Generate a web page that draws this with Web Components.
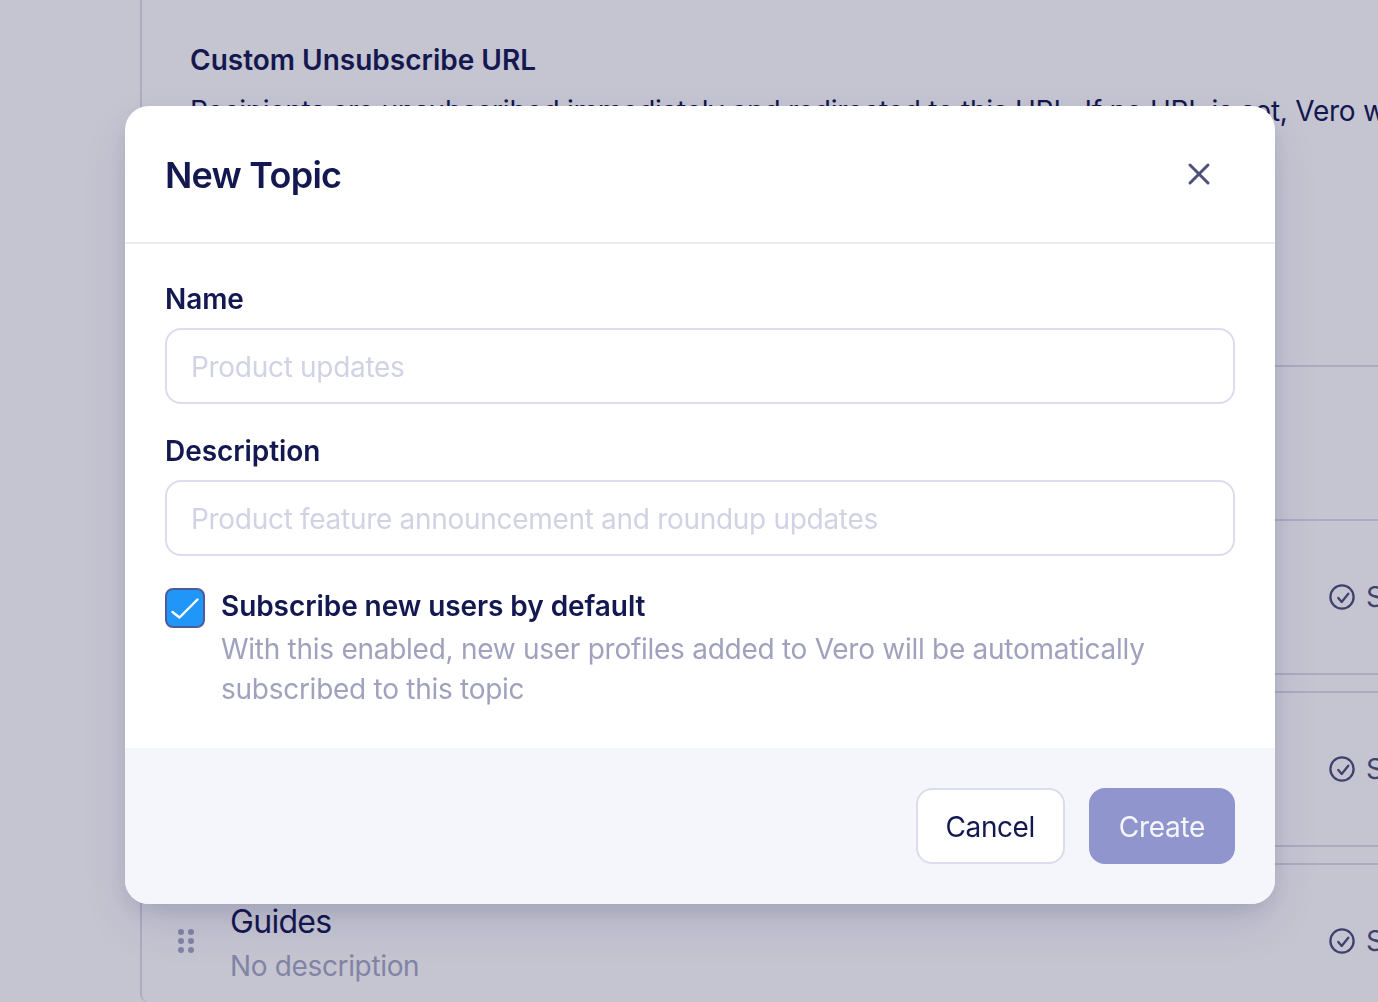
<!DOCTYPE html>
<html lang="en">
<head>
<meta charset="utf-8">
<title>New Topic</title>
<style>
  html, body { margin: 0; height: 100%; overflow: hidden; }
  body { font-family: Inter, "Liberation Sans", sans-serif; color: #141850; background: #fff; }
</style>
</head>
<body>
<settings-page>
  <topic-row name="" description=""></topic-row>
  <topic-row name="" description="" status="Subscribed"></topic-row>
  <topic-row name="" description="" status="Subscribed"></topic-row>
  <topic-row name="Guides" description="No description" status="Subscribed"></topic-row>
</settings-page>

<modal-overlay>
  <span slot="title">New Topic</span>
  <form-field label="Name" placeholder="Product updates"></form-field>
  <form-field label="Description" placeholder="Product feature announcement and roundup updates"></form-field>
  <check-option label="Subscribe new users by default">With this enabled, new user profiles added to Vero will be automatically subscribed to this topic</check-option>
  <app-button slot="footer">Cancel</app-button>
  <app-button slot="footer" primary>Create</app-button>
</modal-overlay>

<script>
class SettingsPage extends HTMLElement {
  constructor() {
    super();
    this.shadowDOM = this.attachShadow({ mode: "open" });
    this.shadowDOM.innerHTML = `
    <style>
      :host { display: flex; height: 1002px; overflow: hidden; }
      .sidebar { flex: 0 0 140px; }
      .main {
        flex: 1;
        min-width: 0;
        border-left: 2px solid #dcdcea;
        border-bottom-left-radius: 8px;
        overflow: hidden;
      }
      .intro { height: 365px; box-sizing: border-box; padding: 41px 0 0 48px; }
      h2 { margin: 0; font-size: 28px; line-height: 38px; font-weight: 600; white-space: nowrap; }
      p { margin: 12px 0 0; font-size: 28px; line-height: 40px; letter-spacing: -0.24px; white-space: nowrap; }
      .rows { display: flex; flex-direction: column; }
    </style>
    <div class="sidebar"></div>
    <div class="main">
      <div class="intro">
        <h2>Custom Unsubscribe URL</h2>
        <p>Recipients are unsubscribed immediately and redirected to this URL. If no URL is set, Vero will show a default page.</p>
      </div>
      <div class="rows"><slot></slot></div>
    </div>`;
  }
}

class TopicRow extends HTMLElement {
  constructor() {
    super();
    this.shadowDOM = this.attachShadow({ mode: "open" });
  }

  connectedCallback() {
    const name = this.getAttribute("name");
    const description = this.getAttribute("description");
    const status = this.getAttribute("status");
    this.shadowDOM.innerHTML = `
    <style>
      :host {
        display: flex;
        flex: none;
        align-items: center;
        box-sizing: border-box;
        height: 156px;
        padding: 0 0 0 36px;
        border-top: 2px solid #dcdcea;
        border-bottom: 2px solid #dcdcea;
        margin-bottom: 16px;
      }
      :host(:first-child) { height: 154px; border-bottom: 0; margin-bottom: 0; }
      .grip { flex: 0 0 16px; width: 16px; height: 24px; margin-right: 36px; }
      .text { flex: 1; min-width: 0; margin-top: 6px; }
      .name { font-size: 32px; line-height: 40px; letter-spacing: -0.7px; }
      .description { margin-top: 4px; font-size: 28px; line-height: 40px; letter-spacing: -0.35px; color: #a6a8c2; }
      .status {
        flex: 0 0 auto;
        width: 49px;
        margin-left: auto;
        display: flex;
        align-items: center;
        gap: 11px;
        font-size: 28px;
        color: #4d507a;
        white-space: nowrap;
      }
      svg { flex: none; display: block; }
    </style>
    ${name ? `
    <svg class="grip" viewBox="0 0 16 24" fill="#a6a8c2">
      <circle cx="3" cy="3" r="3"/><circle cx="13" cy="3" r="3"/>
      <circle cx="3" cy="12" r="3"/><circle cx="13" cy="12" r="3"/>
      <circle cx="3" cy="21" r="3"/><circle cx="13" cy="21" r="3"/>
    </svg>
    <div class="text">
      <div class="name">${name}</div>
      <div class="description">${description}</div>
    </div>` : ""}
    ${status ? `
    <div class="status">
      <svg width="26" height="26" viewBox="0 0 26 26" fill="none" stroke="#4d507a" stroke-width="2.3" stroke-linecap="round" stroke-linejoin="round">
        <circle cx="13" cy="13" r="11.6"/>
        <path d="M9.3 14l3.4 4 6.6-8.3"/>
      </svg>
      <span>${status}</span>
    </div>` : ""}`;
  }
}

class ModalOverlay extends HTMLElement {
  constructor() {
    super();
    this.shadowDOM = this.attachShadow({ mode: "open" });
    this.shadowDOM.innerHTML = `
    <style>
      :host {
        position: fixed;
        inset: 0;
        display: flex;
        align-items: flex-start;
        justify-content: center;
        padding: 106px 0 0 22px;
        box-sizing: border-box;
        background: rgba(23, 23, 75, 0.25);
      }
      .dialog {
        width: 1150px;
        height: 798px;
        display: flex;
        flex-direction: column;
        background: #fff;
        border-radius: 24px;
        overflow: hidden;
      }
      .shadow {
        border-radius: 24px;
        box-shadow: 0 20px 50px -6px rgba(20, 24, 80, 0.14), 0 8px 20px -4px rgba(20, 24, 80, 0.10);
      }
      header {
        flex: 0 0 auto;
        height: 138px;
        box-sizing: border-box;
        display: flex;
        align-items: center;
        justify-content: space-between;
        padding: 0 64px 0 40px;
        border-bottom: 2px solid #ebebf3;
      }
      h1 { margin: 2px 0 0; font-size: 36px; line-height: 44px; font-weight: 600; letter-spacing: -0.75px; }
      .close { display: block; width: 24px; height: 24px; margin-top: -1px; }
      main { flex: 1; display: flex; flex-direction: column; gap: 27px; padding: 35px 40px 0 41px; }
      footer {
        flex: 0 0 156px;
        box-sizing: border-box;
        display: flex;
        justify-content: flex-end;
        align-items: center;
        gap: 24px;
        padding: 0 40px;
        background: #f5f6fb;
      }
    </style>
    <div class="shadow">
      <div class="dialog">
        <header>
          <h1><slot name="title"></slot></h1>
          <svg class="close" viewBox="0 0 24 24" fill="none" stroke="#4d507a" stroke-width="3" stroke-linecap="round">
            <path d="M3 3l18 18M21 3L3 21"/>
          </svg>
        </header>
        <main><slot></slot></main>
        <footer><slot name="footer"></slot></footer>
      </div>
    </div>`;
  }
}

class FormField extends HTMLElement {
  constructor() {
    super();
    this.shadowDOM = this.attachShadow({ mode: "open" });
  }

  connectedCallback() {
    this.shadowDOM.innerHTML = `
    <style>
      :host { display: block; margin-left: -1px; }
      label { display: block; font-size: 28px; line-height: 40px; font-weight: 600; letter-spacing: -0.07px; margin-bottom: 9px; }
      input {
        display: block;
        width: 100%;
        height: 76px;
        box-sizing: border-box;
        padding: 2px 24px 0;
        border: 2px solid #dcdcee;
        border-radius: 16px;
        outline: none;
        background: #fff;
        font: 400 28px/40px Inter, "Liberation Sans", sans-serif;
        letter-spacing: -0.3px;
        color: #141850;
      }
      input::placeholder { color: #d1d2e3; opacity: 1; }
    </style>
    <label>${this.getAttribute("label")}</label>
    <input type="text" placeholder="${this.getAttribute("placeholder")}">`;
  }
}

class CheckOption extends HTMLElement {
  constructor() {
    super();
    this.shadowDOM = this.attachShadow({ mode: "open" });
  }

  connectedCallback() {
    this.shadowDOM.innerHTML = `
    <style>
      :host { display: flex; gap: 16px; margin: 3px 0 0 -1px; }
      .box { flex: none; width: 40px; height: 40px; display: block; margin-top: 2px; }
      .label { font-size: 28px; line-height: 40px; font-weight: 600; letter-spacing: -0.07px; }
      .hint { font-size: 28px; line-height: 40px; letter-spacing: -0.27px; color: #a0a2bd; margin-top: 3px; }
    </style>
    <svg class="box" viewBox="0 0 40 40">
      <rect x="1" y="1" width="38" height="38" rx="7" fill="#2196f9" stroke="#4d5c96" stroke-width="2"/>
      <path d="M7.5 24l7 5.5L32.5 11.5" fill="none" stroke="#fff" stroke-width="2.4" stroke-linecap="round" stroke-linejoin="round"/>
    </svg>
    <div>
      <div class="label">${this.getAttribute("label")}</div>
      <div class="hint"><slot></slot></div>
    </div>`;
  }
}

class AppButton extends HTMLElement {
  constructor() {
    super();
    this.shadowDOM = this.attachShadow({ mode: "open" });
    this.shadowDOM.innerHTML = `
    <style>
      :host {
        display: flex;
        align-items: center;
        height: 76px;
        box-sizing: border-box;
        padding: 2px 28px 0;
        border: 2px solid #dcdcee;
        border-radius: 16px;
        background: #fff;
        font-size: 28px;
        letter-spacing: -0.45px;
        color: #141850;
      }
      :host([primary]) { border-color: #9095ce; background: #9095ce; color: #f5f6fb; letter-spacing: -0.3px; }
    </style>
    <slot></slot>`;
  }
}

customElements.define("settings-page", SettingsPage);
customElements.define("topic-row", TopicRow);
customElements.define("modal-overlay", ModalOverlay);
customElements.define("form-field", FormField);
customElements.define("check-option", CheckOption);
customElements.define("app-button", AppButton);
</script>
</body>
</html>
